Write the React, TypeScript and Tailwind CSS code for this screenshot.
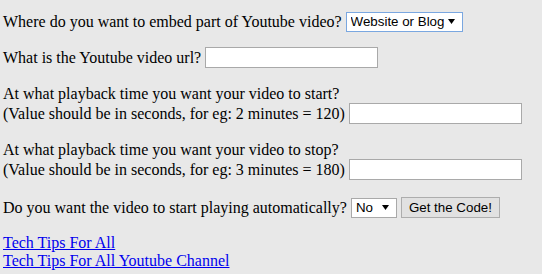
import { useState } from 'react'

const serif = "font-['Liberation_Serif','Times_New_Roman',serif]"
const sans = "font-['Liberation_Sans',Arial,sans-serif]"

function Caret() {
  return (
    <svg
      className="pointer-events-none absolute right-[8px] top-[7px]"
      width="7"
      height="5"
      viewBox="0 0 7 5"
    >
      <path d="M0 0h7L3.5 5z" fill="#000" />
    </svg>
  )
}

function Dropdown({
  options,
  width,
  focused,
}: {
  options: string[]
  width: string
  focused?: boolean
}) {
  const [value, setValue] = useState(options[0])
  return (
    <div className={`relative ${width} h-[20px]`}>
      <select
        value={value}
        onChange={(e) => setValue(e.target.value)}
        className={`${sans} appearance-none w-full h-full bg-white border ${
          focused ? 'border-[#7aa7e0]' : 'border-[#a9a9a9]'
        } pl-[4px] text-[13.33px] leading-[18px] text-black outline-none`}
      >
        {options.map((o) => (
          <option key={o}>{o}</option>
        ))}
      </select>
      <Caret />
    </div>
  )
}

function TextBox({ width }: { width: string }) {
  return (
    <input
      type="text"
      className={`${sans} ${width} h-[21px] bg-white border border-[#a9a9a9] px-[2px] text-[13.33px] outline-none`}
    />
  )
}

export default function App() {
  return (
    <div className={`${serif} min-h-[274px] w-full bg-[#e8e8e8] text-black text-[16px] leading-[18px] pl-[3px] pt-[12px]`}>
      {/* Embed target */}
      <div className="flex items-center gap-[4px] h-[20px]">
        <span>Where do you want to embed part of Youtube video?</span>
        <Dropdown options={['Website or Blog', 'Forum']} width="w-[117px]" focused />
      </div>

      {/* Video url */}
      <div className="mt-[15px] flex items-center gap-[4px] h-[21px]">
        <span>What is the Youtube video url?</span>
        <TextBox width="w-[173px]" />
      </div>

      {/* Start time */}
      <div className="mt-[17px]">
        <div className="h-[18px]">At what playback time you want your video to start?</div>
        <div className="flex items-center gap-[4px] h-[21px]">
          <span>(Value should be in seconds, for eg: 2 minutes = 120)</span>
          <TextBox width="w-[173px]" />
        </div>
      </div>

      {/* Stop time */}
      <div className="mt-[17px]">
        <div className="h-[18px]">At what playback time you want your video to stop?</div>
        <div className="flex items-center gap-[4px] h-[21px]">
          <span>(Value should be in seconds, for eg: 3 minutes = 180)</span>
          <TextBox width="w-[173px]" />
        </div>
      </div>

      {/* Autoplay */}
      <div className="mt-[17px] flex items-center gap-[4px] h-[21px]">
        <span>Do you want the video to start playing automatically?</span>
        <Dropdown options={['No', 'Yes']} width="w-[46px]" />
        <button
          type="button"
          className={`${sans} w-[99px] h-[21px] bg-[#e1e1e1] border border-[#adadad] text-[13.33px] text-black`}
        >
          Get the Code!
        </button>
      </div>

      {/* Links */}
      <div className="mt-[16px] flex flex-col items-start">
        <a href="#" className="text-[#0000ee] underline">
          Tech Tips For All
        </a>
        <a href="#" className="text-[#0000ee] underline">
          Tech Tips For All Youtube Channel
        </a>
      </div>
    </div>
  )
}
